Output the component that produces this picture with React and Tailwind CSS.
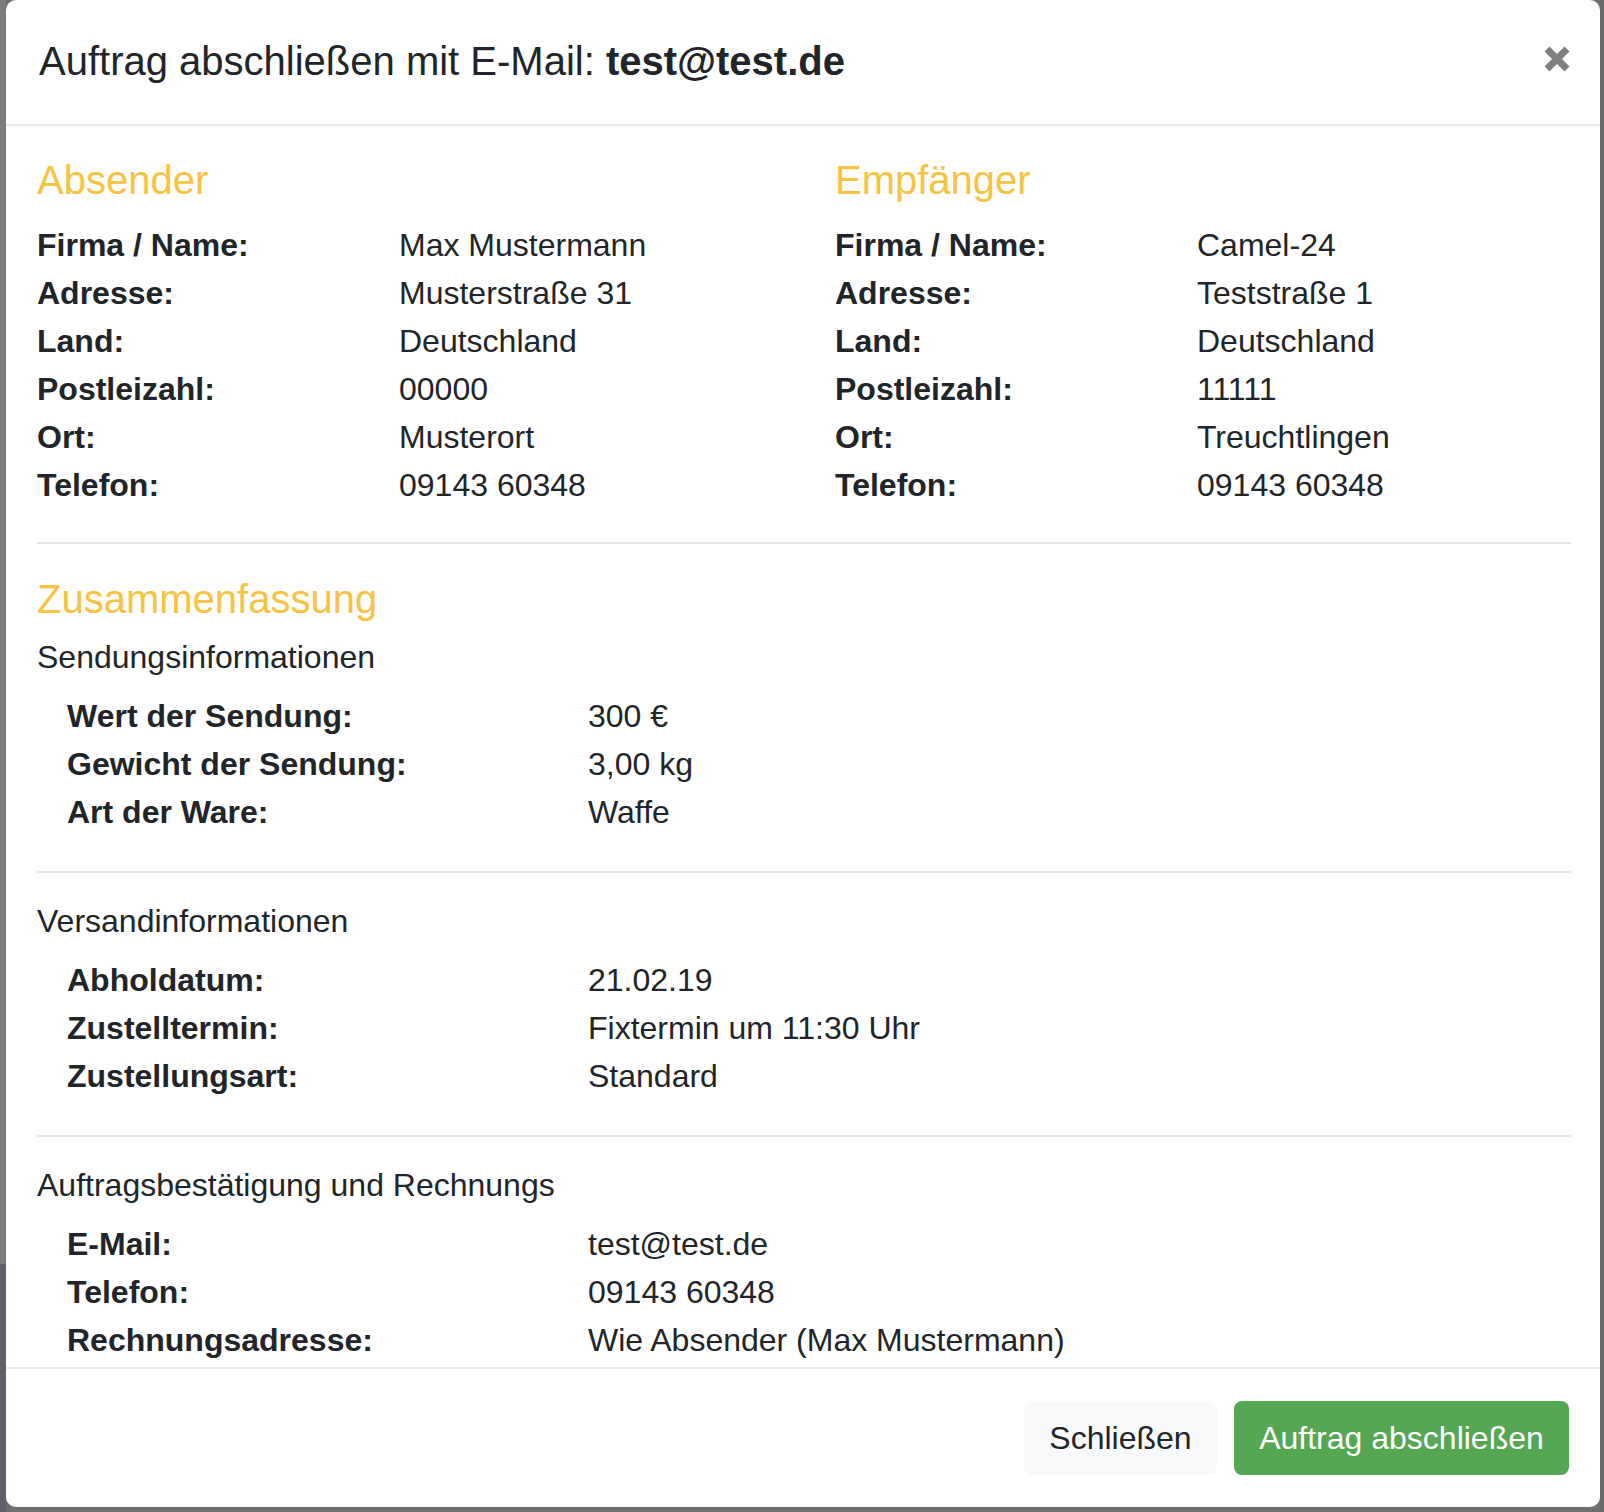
import { useState } from 'react';

const absender = [
  ['Firma / Name:', 'Max Mustermann'],
  ['Adresse:', 'Musterstraße 31'],
  ['Land:', 'Deutschland'],
  ['Postleizahl:', '00000'],
  ['Ort:', 'Musterort'],
  ['Telefon:', '09143 60348'],
];

const empfaenger = [
  ['Firma / Name:', 'Camel-24'],
  ['Adresse:', 'Teststraße 1'],
  ['Land:', 'Deutschland'],
  ['Postleizahl:', '11111'],
  ['Ort:', 'Treuchtlingen'],
  ['Telefon:', '09143 60348'],
];

const sendung = [
  ['Wert der Sendung:', '300 €'],
  ['Gewicht der Sendung:', '3,00 kg'],
  ['Art der Ware:', 'Waffe'],
];

const versand = [
  ['Abholdatum:', '21.02.19'],
  ['Zustelltermin:', 'Fixtermin um 11:30 Uhr'],
  ['Zustellungsart:', 'Standard'],
];

const rechnung = [
  ['E-Mail:', 'test@test.de'],
  ['Telefon:', '09143 60348'],
  ['Rechnungsadresse:', 'Wie Absender (Max Mustermann)'],
];

function AddressBlock({ title, rows }) {
  return (
    <div>
      <h5 className="text-[40px] leading-[48px] text-[#f6c343]">{title}</h5>
      <div className="mt-[17px]">
        {rows.map(([label, value]) => (
          <div key={label} className="flex leading-[48px]">
            <div className="w-[362px] shrink-0 font-bold">{label}</div>
            <div>{value}</div>
          </div>
        ))}
      </div>
    </div>
  );
}

function SummaryGroup({ title, rows, className }) {
  return (
    <div className={className}>
      <div className="leading-[48px]">{title}</div>
      <div className="mt-[11px] pl-[30px]">
        {rows.map(([label, value]) => (
          <div key={label} className="flex leading-[48px]">
            <div className="w-[521px] shrink-0 font-bold">{label}</div>
            <div>{value}</div>
          </div>
        ))}
      </div>
    </div>
  );
}

function CloseIcon() {
  return (
    <svg width="28" height="28" viewBox="0 0 28 28" aria-hidden="true">
      <path d="M4 4 L24 24 M24 4 L4 24" stroke="#7f7f7f" strokeWidth="7" strokeLinecap="butt" />
    </svg>
  );
}

export default function App() {
  const [open, setOpen] = useState(true);

  return (
    <div
      className="flex h-[1512px] w-[1604px] overflow-hidden bg-[#6f6f6f] text-[32px] text-[#212529]"
      style={{ fontFamily: '"Liberation Sans", Arial, Helvetica, sans-serif' }}
    >
      {/* page behind the backdrop */}
      <div className="flex w-[6px] shrink-0 flex-col">
        <div className="h-[1264px] bg-[#7b7b7b]" />
        <div className="flex-1 bg-[#5e6266]" />
      </div>

      <div className="flex h-[1507px] w-[1594px] shrink-0 flex-col overflow-hidden rounded-[10px] bg-white">
        {/* Header */}
        <div className="flex h-[126px] shrink-0 items-center justify-between border-b-2 border-[#e9ecef] pb-[2px] pl-[33px] pr-[29px]">
          <h5 className="text-[40px] leading-[48px]">
            Auftrag abschließen mit E-Mail: <span className="font-bold">test@test.de</span>
          </h5>
          <button type="button" onClick={() => setOpen(!open)} className="mb-[4px] flex items-center">
            <CloseIcon />
          </button>
        </div>

        {/* Body */}
        <div className="h-[1241px] shrink-0 overflow-hidden pl-[31px] pr-[29px] pt-[30px]">
          <div className="flex">
            <div className="w-[798px] shrink-0">
              <AddressBlock title="Absender" rows={absender} />
            </div>
            <div className="flex-1">
              <AddressBlock title="Empfänger" rows={empfaenger} />
            </div>
          </div>

          <div className="mt-[33px] h-[2px] bg-[#e6e6e6]" />

          <h5 className="mt-[31px] text-[40px] leading-[48px] text-[#f6c343]">Zusammenfassung</h5>
          <SummaryGroup title="Sendungsinformationen" rows={sendung} className="mt-[10px]" />

          <div className="mt-[35px] h-[2px] bg-[#e6e6e6]" />
          <SummaryGroup title="Versandinformationen" rows={versand} className="mt-[24px]" />

          <div className="mt-[35px] h-[2px] bg-[#e6e6e6]" />
          <SummaryGroup title="Auftragsbestätigung und Rechnungs" rows={rechnung} className="mt-[24px]" />
        </div>

        {/* Footer */}
        <div className="flex flex-1 items-center justify-end gap-[17px] border-t-2 border-[#e9ecef] pr-[31px]">
          <button
            type="button"
            className="h-[74px] w-[193px] rounded-[8px] bg-[#f8f9fa] text-[32px] leading-[48px] text-[#212529]"
          >
            Schließen
          </button>
          <button
            type="button"
            className="h-[74px] w-[335px] rounded-[8px] bg-[#55a753] text-[32px] leading-[48px] text-white"
          >
            Auftrag abschließen
          </button>
        </div>
      </div>

      <div className="w-[4px] shrink-0 bg-[#6a6a6a]" />
    </div>
  );
}
